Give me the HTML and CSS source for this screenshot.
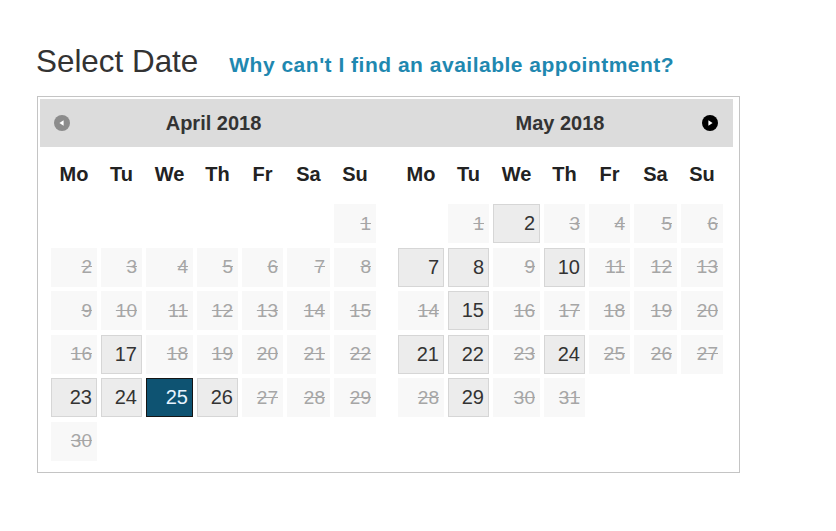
FILE: index.html
```html
<!DOCTYPE html>
<html>
<head>
<meta charset="utf-8">
<link rel="stylesheet" href="styles.css">
</head>
<body>
<div class="page">
  <div class="title-row">
    <h1 class="title">Select Date</h1>
    <a class="help-link" href="#">Why can't I find an available appointment?</a>
  </div>
  <div class="picker">
    <div class="group">
      <div class="month-header">
        <span class="nav nav-prev"><svg width="16" height="16" viewBox="0 0 16 16"><circle cx="8" cy="8" r="8" fill="#8c8c8c"/><path d="M5.4 8 L9.6 5.2 L9.6 10.8 Z" fill="#fff"/></svg></span>
        <span class="month-title">April 2018</span>
        <span class="nav-spacer"></span>
      </div>
      <div class="weekdays">
        <span>Mo</span><span>Tu</span><span>We</span><span>Th</span><span>Fr</span><span>Sa</span><span>Su</span>
      </div>
      <div class="days">
        <span class="day empty"></span><span class="day empty"></span><span class="day empty"></span><span class="day empty"></span><span class="day empty"></span><span class="day empty"></span><span class="day off">1</span>
        <span class="day off">2</span><span class="day off">3</span><span class="day off">4</span><span class="day off">5</span><span class="day off">6</span><span class="day off">7</span><span class="day off">8</span>
        <span class="day off">9</span><span class="day off">10</span><span class="day off">11</span><span class="day off">12</span><span class="day off">13</span><span class="day off">14</span><span class="day off">15</span>
        <span class="day off">16</span><span class="day open">17</span><span class="day off">18</span><span class="day off">19</span><span class="day off">20</span><span class="day off">21</span><span class="day off">22</span>
        <span class="day open">23</span><span class="day open">24</span><span class="day selected">25</span><span class="day open">26</span><span class="day off">27</span><span class="day off">28</span><span class="day off">29</span>
        <span class="day off">30</span>
      </div>
    </div>
    <div class="group">
      <div class="month-header">
        <span class="nav-spacer"></span>
        <span class="month-title">May 2018</span>
        <span class="nav nav-next"><svg width="16" height="16" viewBox="0 0 16 16"><circle cx="8" cy="8" r="8" fill="#000"/><path d="M10.6 8 L6.4 5.2 L6.4 10.8 Z" fill="#fff"/></svg></span>
      </div>
      <div class="weekdays">
        <span>Mo</span><span>Tu</span><span>We</span><span>Th</span><span>Fr</span><span>Sa</span><span>Su</span>
      </div>
      <div class="days">
        <span class="day empty"></span><span class="day off">1</span><span class="day open">2</span><span class="day off">3</span><span class="day off">4</span><span class="day off">5</span><span class="day off">6</span>
        <span class="day open">7</span><span class="day open">8</span><span class="day off">9</span><span class="day open">10</span><span class="day off">11</span><span class="day off">12</span><span class="day off">13</span>
        <span class="day off">14</span><span class="day open">15</span><span class="day off">16</span><span class="day off">17</span><span class="day off">18</span><span class="day off">19</span><span class="day off">20</span>
        <span class="day open">21</span><span class="day open">22</span><span class="day off">23</span><span class="day open">24</span><span class="day off">25</span><span class="day off">26</span><span class="day off">27</span>
        <span class="day off">28</span><span class="day open">29</span><span class="day off">30</span><span class="day off">31</span>
      </div>
    </div>
  </div>
</div>
</body>
</html>
```

FILE: styles.css
```css
html, body {
  margin: 0;
  padding: 0;
  background: #fff;
}
body {
  font-family: "Liberation Sans", Arial, sans-serif;
  color: #333;
}
.page {
  padding: 44px 0 0 36px;
}
.title-row {
  display: flex;
  align-items: baseline;
  gap: 31px;
  height: 36px;
}
.title {
  margin: 0;
  font-size: 31.4px;
  font-weight: normal;
  line-height: 36px;
  color: #333;
}
.help-link {
  font-size: 21px;
  font-weight: bold;
  letter-spacing: 0.5px;
  color: #1f88b0;
  text-decoration: none;
}
.picker {
  margin: 16px 0 0 1px;
  width: 695px;
  border: 1px solid #c4c4c4;
  padding: 2px 4px 0 2px;
  height: 373px;
  display: flex;
}
.group {
  width: 347px;
}
.group + .group {
  width: 346px;
}
.month-header {
  height: 48px;
  background: #dcdcdc;
  display: grid;
  grid-template-columns: 1fr auto 1fr;
  align-items: center;
}
.month-title {
  font-size: 20px;
  font-weight: bold;
  color: #333;
}
.nav {
  display: flex;
}
.nav svg {
  display: block;
}
.nav-prev {
  justify-self: start;
  margin-left: 14px;
}
.nav-next {
  justify-self: end;
  margin-right: 15px;
}
.weekdays,
.days {
  display: grid;
  grid-template-columns: 46px 41px 47px 41px 41px 43px 42px;
  column-gap: 4px;
  margin-left: 11px;
}
.weekdays {
  margin-top: 5px;
  height: 44px;
  align-items: center;
}
.weekdays span {
  text-align: center;
  font-size: 20px;
  font-weight: bold;
  color: #222;
}
.days {
  margin-top: 8px;
  grid-auto-rows: 39px;
  row-gap: 4.6px;
}
.day {
  box-sizing: border-box;
  display: flex;
  align-items: center;
  justify-content: flex-end;
  padding-right: 5px;
  font-size: 20px;
}
.day.off {
  background: #f8f8f8;
  color: #a6a6a6;
  font-size: 19px;
  text-decoration: line-through;
}
.day.open {
  background: #ececec;
  border: 1px solid #d6d6d6;
  color: #333;
  padding-right: 4px;
}
.day.selected {
  background: #0e5372;
  border: 1px solid #151515;
  color: #e6f3ff;
  padding-right: 4px;
}
```
